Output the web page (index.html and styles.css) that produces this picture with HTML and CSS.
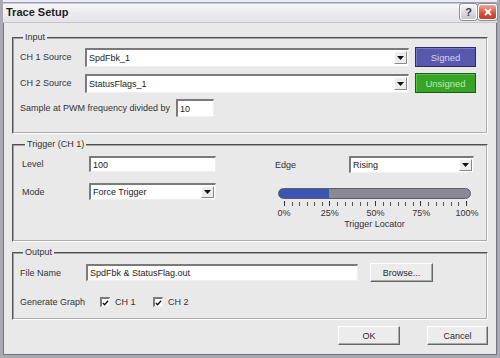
FILE: index.html
```html
<!DOCTYPE html>
<html lang="en">
<head>
  <meta charset="UTF-8">
  <title>Trace Setup</title>
  <link rel="stylesheet" href="styles.css">
</head>
<body>
  <div class="window">
    <div class="titlebar">
      <span class="title">Trace Setup</span>
      <div class="cap-btns">
        <span class="cap-btn help">?</span>
        <span class="cap-btn close">
          <svg viewBox="0 0 10 10"><path d="M2 2 8 8M8 2 2 8" /></svg>
        </span>
      </div>
    </div>

    <div class="content">
      <!-- Input -->
      <fieldset class="group group-input">
        <legend>Input</legend>
        <div class="row row-src">
          <label class="lbl lbl-src">CH 1 Source</label>
          <div class="combo combo-src">
            <span class="combo-text">SpdFbk_1</span>
            <span class="drop"><svg viewBox="0 0 7 4"><path d="M0 0h7L3.5 4z" /></svg></span>
          </div>
          <button class="sign-btn signed">Signed</button>
        </div>
        <div class="row row-src">
          <label class="lbl lbl-src">CH 2 Source</label>
          <div class="combo combo-src">
            <span class="combo-text">StatusFlags_1</span>
            <span class="drop"><svg viewBox="0 0 7 4"><path d="M0 0h7L3.5 4z" /></svg></span>
          </div>
          <button class="sign-btn unsigned">Unsigned</button>
        </div>
        <div class="row row-sample">
          <label class="lbl lbl-sample">Sample at PWM frequency divided by</label>
          <div class="edit edit-div">10</div>
        </div>
      </fieldset>

      <!-- Trigger -->
      <fieldset class="group group-trigger">
        <legend>Trigger (CH 1)</legend>
        <div class="trig">
          <div class="trig-left">
            <div class="row row-level">
              <label class="lbl lbl-trig">Level</label>
              <div class="edit edit-level">100</div>
            </div>
            <div class="row row-mode">
              <label class="lbl lbl-trig">Mode</label>
              <div class="combo combo-mode">
                <span class="combo-text">Force Trigger</span>
                <span class="drop"><svg viewBox="0 0 7 4"><path d="M0 0h7L3.5 4z" /></svg></span>
              </div>
            </div>
          </div>
          <div class="trig-right">
            <div class="row row-edge">
              <label class="lbl lbl-edge">Edge</label>
              <div class="combo combo-edge">
                <span class="combo-text">Rising</span>
                <span class="drop"><svg viewBox="0 0 7 4"><path d="M0 0h7L3.5 4z" /></svg></span>
              </div>
            </div>
            <div class="locator">
              <div class="track"></div>
              <div class="ticks"></div>
              <div class="tick-labels">
                <span>0%</span><span>25%</span><span>50%</span><span>75%</span><span>100%</span>
              </div>
              <div class="loc-caption">Trigger Locator</div>
            </div>
          </div>
        </div>
      </fieldset>

      <!-- Output -->
      <fieldset class="group group-output">
        <legend>Output</legend>
        <div class="row row-file">
          <label class="lbl lbl-file">File Name</label>
          <div class="edit edit-file">SpdFbk &amp; StatusFlag.out</div>
          <button class="push-btn browse">Browse...</button>
        </div>
        <div class="row row-graph">
          <label class="lbl lbl-graph">Generate Graph</label>
          <span class="check-item">
            <span class="check"><svg viewBox="0 0 8 8"><path d="M1 4 3 6 7 1.5" /></svg></span>CH 1
          </span>
          <span class="check-item">
            <span class="check"><svg viewBox="0 0 8 8"><path d="M1 4 3 6 7 1.5" /></svg></span>CH 2
          </span>
        </div>
      </fieldset>

      <div class="footer">
        <button class="push-btn ok">OK</button>
        <button class="push-btn cancel">Cancel</button>
      </div>
    </div>
  </div>
</body>
</html>
```

FILE: styles.css
```css
body {
  margin: 0;
  padding: 0;
  font-family: 'Liberation Sans', Arial, sans-serif;
  font-size: 9px;
  color: #333333;
  background-color: #ffffff;
}
.window {
  width: 500px;
  height: 358px;
  box-sizing: border-box;
  border: 3px solid #a9a9b1;
  border-top-width: 0;
  background-color: #e9e9e9;
  box-shadow: inset 0 0 0 1px #74747c;
  display: flex;
  flex-direction: column;
}

/* Barra de titulo */
.titlebar {
  height: 23px;
  box-sizing: border-box;
  display: flex;
  align-items: center;
  justify-content: space-between;
  padding: 2px 0 0 3px;
  border-bottom: 1px solid #c4c4ca;
  background: linear-gradient(#ececf0 0, #ececf0 2px, #9a9ac2 2px, #9a9ac2 3px, #f6f6f8 4px, #e2e2e8 100%);
}
.title {
  font-size: 11px;
  font-weight: bold;
  color: #1e1e1e;
}
.cap-btns {
  display: flex;
  gap: 1px;
  align-self: flex-start;
  margin-top: 2px;
}
.cap-btn {
  height: 16px;
  box-sizing: border-box;
  border: 1px solid #ffffff;
  border-radius: 3px;
  box-shadow: 0 0 0 1px #8c8c98;
  display: flex;
  align-items: center;
  justify-content: center;
}
.help {
  width: 17px;
  background: linear-gradient(#f6f6f6, #c6c6cc);
  font-size: 11px;
  font-weight: bold;
  color: #34344a;
}
.close {
  width: 19px;
  background: linear-gradient(#f2a898, #d4503a 60%, #c04028);
}
.close svg {
  width: 10px;
  height: 10px;
  stroke: #ffffff;
  stroke-width: 1.8;
  fill: none;
}

/* Conteudo */
.content {
  flex: 1;
  padding: 9px 9px 0 9px;
  display: flex;
  flex-direction: column;
}
.group {
  margin: 0;
  border: 2px groove #f4f4f4;
  border-color: #a4a4a4 #ffffff #ffffff #a4a4a4;
  border-style: groove;
}
.group legend {
  padding: 0 2px;
  margin-left: 3px;
  line-height: 11px;
}
.group-input {
  padding: 4px 6px 15px 6px;
}
.group-trigger {
  margin-top: 5px;
  padding: 6px 6px 11px 8px;
}
.group-output {
  margin-top: 5px;
  padding: 5px 6px 9px 6px;
}
.row {
  display: flex;
  align-items: center;
  white-space: nowrap;
}
.lbl {
  flex: none;
}
.lbl-src {
  width: 65px;
}
.lbl-sample {
  width: 156px;
}
.lbl-trig {
  width: 67px;
}
.lbl-edge {
  width: 74px;
}
.lbl-file {
  width: 66px;
}
.lbl-graph {
  width: 80px;
}
.row-src {
  height: 20px;
  margin-bottom: 6px;
}
.row-sample {
  height: 18px;
}

/* Campos */
.combo,
.edit {
  box-sizing: border-box;
  background-color: #ffffff;
  border-style: solid;
  border-width: 2px 1px 1px 2px;
  border-color: #7a7a7a #efefef #efefef #7a7a7a;
  display: flex;
  align-items: center;
  padding-left: 2px;
  color: #222;
}
.combo-src {
  width: 324px;
  height: 19px;
}
.combo-mode {
  width: 127px;
  height: 17px;
}
.combo-edge {
  width: 125px;
  height: 17px;
}
.combo-text {
  flex: 1;
}
.drop {
  width: 13px;
  height: 13px;
  box-sizing: border-box;
  margin-right: 1px;
  background-color: #ececec;
  border: 1px solid;
  border-color: #ffffff #8a8a8a #8a8a8a #ffffff;
  display: flex;
  align-items: center;
  justify-content: center;
}
.drop svg {
  width: 7px;
  height: 4px;
  fill: #111;
}
.combo-mode .drop,
.combo-edge .drop {
  height: 12px;
}
.edit-div {
  width: 38px;
  height: 18px;
}
.edit-level {
  width: 127px;
  height: 16px;
}
.edit-file {
  width: 272px;
  height: 17px;
}

/* Botoes de sinal */
.sign-btn {
  width: 61px;
  height: 20px;
  margin-left: 6px;
  padding: 0;
  font-family: inherit;
  font-size: 9.5px;
  border: 1px solid;
  box-sizing: border-box;
}
.signed {
  background-color: #5858ac;
  border-color: #2c2c62;
  color: #d4d4f2;
  box-shadow: inset 1px 1px 0 #7a7ac4;
}
.unsigned {
  background-color: #38a426;
  border-color: #1e5a16;
  color: #bdeab2;
  box-shadow: inset 1px 1px 0 #5cc24a;
}

/* Trigger */
.trig {
  display: flex;
}
.trig-left {
  width: 253px;
}
.row-level {
  height: 16px;
}
.row-mode {
  height: 17px;
  margin-top: 11px;
}
.row-edge {
  height: 17px;
}
.locator {
  width: 193px;
  margin: 15px 0 0 3px;
}
.track {
  height: 11px;
  box-sizing: border-box;
  border: 1px solid #5c5c66;
  border-radius: 6px;
  background: linear-gradient(to right, #3a56b2 0, #3a56b2 50px, #8a8894 50px);
}
.ticks {
  width: 183px;
  height: 5px;
  margin: 2px 0 0 6px;
  background-image: repeating-linear-gradient(to right, #333 0, #333 1px, transparent 1px, transparent 45.5px),
    repeating-linear-gradient(to right, #555 0, #555 1px, transparent 1px, transparent 7.583px);
  background-size: 100% 5px, 100% 4px;
  background-repeat: no-repeat;
  background-position: 0 0, 0 1px;
}
.tick-labels {
  width: 183px;
  margin: 2px 0 0 6px;
  display: flex;
  justify-content: space-between;
  line-height: 10px;
}
.tick-labels span {
  width: 0;
  display: flex;
  justify-content: center;
  white-space: nowrap;
}
.loc-caption {
  text-align: center;
  line-height: 10px;
  margin-top: 1px;
}

/* Output */
.row-file {
  height: 19px;
}
.push-btn {
  box-sizing: border-box;
  padding: 0;
  font-family: inherit;
  font-size: 9px;
  color: #2a2a2a;
  background-color: #ececec;
  border: 1px solid;
  border-color: #ffffff #666666 #666666 #ffffff;
  box-shadow: inset -1px -1px 0 #a8a8a8;
}
.browse {
  width: 63px;
  height: 19px;
  margin-left: 12px;
}
.row-graph {
  height: 14px;
  margin-top: 13px;
}
.check-item {
  width: 53px;
  display: flex;
  align-items: center;
  gap: 5px;
}
.check {
  width: 10px;
  height: 10px;
  box-sizing: border-box;
  background-color: #ffffff;
  border-style: solid;
  border-width: 2px 1px 1px 2px;
  border-color: #7a7a7a #efefef #efefef #7a7a7a;
  display: flex;
}
.check svg {
  width: 8px;
  height: 8px;
  fill: none;
  stroke: #111;
  stroke-width: 1.6;
}

/* Rodape */
.footer {
  display: flex;
  justify-content: flex-end;
  gap: 27px;
  margin-top: 6px;
}
.ok {
  width: 62px;
  height: 19px;
}
.cancel {
  width: 61px;
  height: 19px;
}
```
